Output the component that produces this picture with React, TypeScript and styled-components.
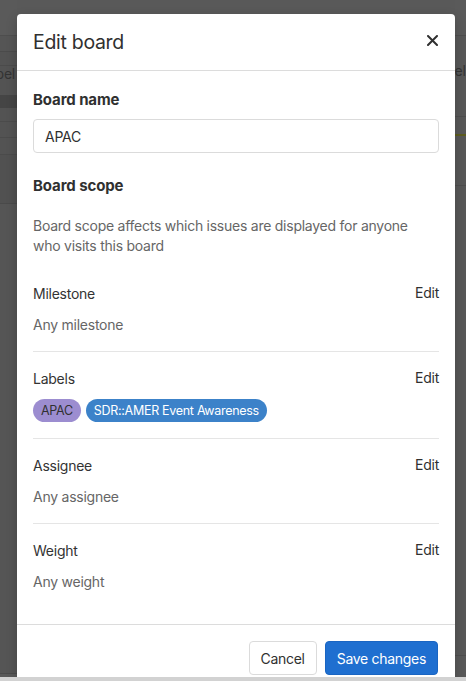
import React from 'react'
import styled, { createGlobalStyle } from 'styled-components'

const GlobalStyle = createGlobalStyle`
  html, body {
    margin: 0;
    padding: 0;
    height: 100%;
    overflow: hidden;
  }
  body {
    font-family: Inter, "Noto Sans", "Liberation Sans", sans-serif;
    background: #595959;
    letter-spacing: -0.25px;
  }
`

interface BackdropLine {
  h: number
  bg?: string
  border?: string
  text?: string
}

const leftLines: BackdropLine[] = [
  { h: 36, bg: '#5a5a5a', border: '#4e4e4e' },
  { h: 16, bg: '#555555', border: '#4b4b4b' },
  { h: 7, bg: '#535353', border: '#4b4b4b' },
  { h: 29, bg: '#535353', text: 'Label' },
  { h: 8, bg: '#454545' },
  { h: 3, bg: '#535353', border: '#4b4b4b' },
  { h: 16, bg: '#535353', border: '#4b4b4b' },
  { h: 17, bg: '#535353', border: '#4b4b4b' },
  { h: 49, bg: '#515151', border: '#4a4a4a' },
  { h: 470, bg: '#555555', border: '#4b4b4b' },
]

const rightLines: BackdropLine[] = [
  { h: 36, bg: '#5a5a5a', border: '#4e4e4e' },
  { h: 81, bg: '#585858', border: '#4e4e4e', text: 'Label' },
  { h: 17, bg: '#585858' },
  { h: 2, bg: '#5e5d1f' },
  { h: 50, bg: '#585858', border: '#4e4e4e' },
  { h: 470, bg: '#585858', border: '#4e4e4e' },
]

const sections = [
  { title: 'Milestone', value: 'Any milestone' },
  { title: 'Labels', labels: true },
  { title: 'Assignee', value: 'Any assignee' },
  { title: 'Weight', value: 'Any weight' },
]

const CloseIcon = () => (
  <svg width='11' height='11' viewBox='0 0 11 11' fill='none'>
    <path
      d='M1 1L10 10M10 1L1 10'
      stroke='#303030'
      strokeWidth='2'
      strokeLinecap='round'
    />
  </svg>
)

const Strip = ({ lines, align }: { lines: BackdropLine[]; align: 'left' | 'right' }) => (
  <StripColumn $align={align}>
    {lines.map((l, i) => (
      <StripRow key={i} $h={l.h} $bg={l.bg} $border={l.border} $align={align}>
        {l.text && <span>{l.text}</span>}
      </StripRow>
    ))}
  </StripColumn>
)

const App = () => (
  <>
    <GlobalStyle />
    <Page>
      <Strip lines={leftLines} align='left' />
      <Spacer />
      <Strip lines={rightLines} align='right' />
    </Page>
    <Modal>
      <Header>
        <Title>Edit board</Title>
        <CloseButton aria-label='Close'>
          <CloseIcon />
        </CloseButton>
      </Header>
      <Body>
        <FieldLabel htmlFor='board-name'>Board name</FieldLabel>
        <Input id='board-name' defaultValue='APAC' />
        <ScopeTitle>Board scope</ScopeTitle>
        <Description>
          Board scope affects which issues are displayed for anyone who visits
          this board
        </Description>
        {sections.map((s) => (
          <Section key={s.title}>
            <SectionHead>
              <span>{s.title}</span>
              <EditLink>Edit</EditLink>
            </SectionHead>
            {s.labels ? (
              <Chips>
                <Chip $bg='#9c8dd0' $color='#303030'>
                  APAC
                </Chip>
                <Chip $bg='#3c82c9' $color='#ffffff'>
                  SDR::AMER Event Awareness
                </Chip>
              </Chips>
            ) : (
              <Value>{s.value}</Value>
            )}
          </Section>
        ))}
      </Body>
      <Footer>
        <CancelButton>Cancel</CancelButton>
        <SaveButton>Save changes</SaveButton>
      </Footer>
    </Modal>
    <BottomBar />
  </>
)

const Page = styled.div`
  display: flex;
  height: 681px;
  overflow: hidden;
`

const Spacer = styled.div`
  flex: 1;
`

const StripColumn = styled.div<{ $align: 'left' | 'right' }>`
  display: flex;
  flex-direction: column;
  width: ${({ $align }) => ($align === 'left' ? '17px' : '11px')};
  overflow: hidden;
`

const StripRow = styled.div<{
  $h: number
  $bg?: string
  $border?: string
  $align: 'left' | 'right'
}>`
  flex: none;
  height: ${({ $h }) => $h}px;
  background: ${({ $bg }) => $bg || '#595959'};
  border-bottom: ${({ $border }) => ($border ? `1px solid ${$border}` : 'none')};
  display: flex;
  align-items: ${({ $align }) => ($align === 'left' ? 'flex-end' : 'center')};
  justify-content: ${({ $align }) => ($align === 'left' ? 'flex-end' : 'flex-start')};
  padding-bottom: ${({ $align }) => ($align === 'left' ? '13px' : '0')};
  box-sizing: border-box;

  > span {
    font-size: 14px;
    color: #333333;
    white-space: nowrap;
    margin-right: ${({ $align }) => ($align === 'left' ? '2px' : '0')};
    margin-left: ${({ $align }) => ($align === 'right' ? '-24px' : '0')};
    margin-top: ${({ $align }) => ($align === 'right' ? '-12px' : '0')};
  }
`

const Modal = styled.div`
  position: absolute;
  top: 14px;
  left: 17px;
  width: 438px;
  background: #ffffff;
  border-radius: 4px 4px 0 0;
  box-shadow: 0 4px 12px rgba(0, 0, 0, 0.2);
  color: #333333;
`

const Header = styled.div`
  display: flex;
  align-items: center;
  justify-content: space-between;
  height: 56px;
  padding: 0 16px;
  border-bottom: 1px solid #dcdcdc;
`

const Title = styled.h4`
  margin: 0;
  font-size: 19.5px;
  font-weight: 400;
  color: #303030;
  letter-spacing: -0.3px;
`

const CloseButton = styled.button`
  all: unset;
  display: flex;
  align-items: center;
  justify-content: center;
  width: 16px;
  height: 16px;
  margin-top: -3px;
  margin-right: -1px;
  cursor: pointer;
`

const Body = styled.div`
  display: flex;
  flex-direction: column;
  padding: 19px 16px 16px;
  font-size: 14px;
`

const FieldLabel = styled.label`
  font-size: 15px;
  font-weight: 700;
  line-height: 20px;
  color: #303030;
  margin-bottom: 9px;
  letter-spacing: -0.1px;
`

const Input = styled.input`
  box-sizing: border-box;
  height: 34px;
  width: 100%;
  padding: 0 11px;
  border: 1px solid #dbdbdb;
  border-radius: 4px;
  font-family: inherit;
  font-size: 14px;
  letter-spacing: -0.25px;
  color: #303030;
  outline: none;
`

const ScopeTitle = styled.div`
  font-size: 15px;
  font-weight: 700;
  line-height: 20px;
  color: #303030;
  margin-top: 23px;
  letter-spacing: -0.1px;
`

const Description = styled.p`
  margin: 20px 0 11px;
  padding-right: 22px;
  line-height: 20px;
  color: #666666;
`

const Section = styled.div`
  padding: 17px 0 16px;
  border-bottom: 1px solid #e5e5e5;

  &:last-child {
    border-bottom: none;
  }
`

const SectionHead = styled.div`
  display: flex;
  justify-content: space-between;
  align-items: center;
  line-height: 20px;
  color: #333333;
`

const EditLink = styled.span`
  color: #303030;
  margin-top: -2px;
  cursor: pointer;
`

const Value = styled.div`
  margin-top: 11px;
  line-height: 20px;
  color: #666666;
`

const Chips = styled.div`
  display: flex;
  gap: 5px;
  margin-top: 10px;
`

const Chip = styled.span<{ $bg: string; $color: string }>`
  display: inline-flex;
  align-items: center;
  height: 23px;
  padding: 0 8px;
  border-radius: 12px;
  background: ${({ $bg }) => $bg};
  color: ${({ $color }) => $color};
  font-size: 12.5px;
  letter-spacing: -0.3px;
  white-space: nowrap;
`

const Footer = styled.div`
  display: flex;
  justify-content: flex-end;
  gap: 8px;
  padding: 16px 17px 16px;
  border-top: 1px solid #dcdcdc;
`

const BaseButton = styled.button`
  height: 34px;
  padding: 0 11px;
  border-radius: 4px;
  font-family: inherit;
  font-size: 14px;
  letter-spacing: -0.3px;
  cursor: pointer;
`

const CancelButton = styled(BaseButton)`
  background: #ffffff;
  border: 1px solid #dbdbdb;
  color: #303030;
`

const SaveButton = styled(BaseButton)`
  background: #1f6fd0;
  border: 1px solid #1a65c2;
  color: #ffffff;
`

const BottomBar = styled.div`
  position: fixed;
  left: 0;
  right: 0;
  bottom: 0;
  height: 4px;
  background: #d2d2d2;
`

export default App
